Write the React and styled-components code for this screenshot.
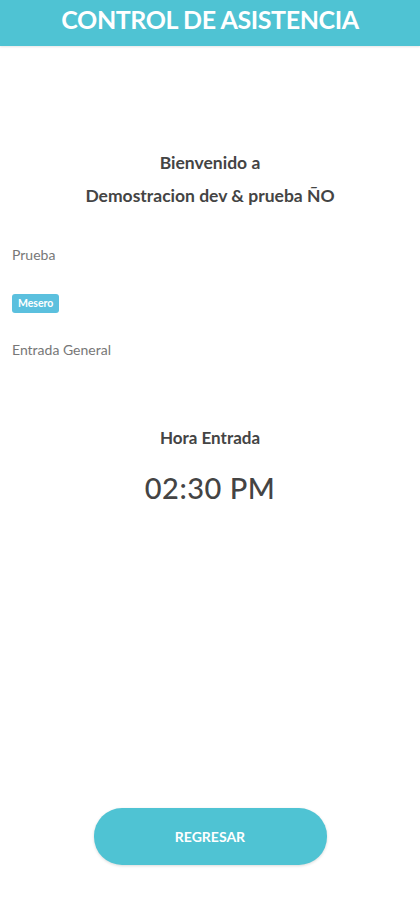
import styled, { createGlobalStyle } from "styled-components";

const Global = createGlobalStyle`
  html, body { margin: 0; padding: 0; background: #fff; }
  body { font-family: Lato, "Open Sans", "Liberation Sans", sans-serif; }
`;

const Page = styled.div`
  display: flex;
  flex-direction: column;
  min-height: 900px;
  box-sizing: border-box;
`;

const Header = styled.header`
  height: 46px;
  background: #4fc3d3;
  display: flex;
  justify-content: center;
  align-items: flex-start;
  box-shadow: 0 1px 2px rgba(0, 0, 0, 0.1);
`;

const Title = styled.h1`
  margin: 0;
  margin-top: 2px;
  color: #fff;
  font-size: 25px;
  font-weight: 700;
  line-height: 34px;
  letter-spacing: -0.4px;
`;

const Welcome = styled.div`
  margin-top: 100px;
  text-align: center;
  color: #444;
  font-size: 17.5px;
  font-weight: 700;
  line-height: 33px;
`;

const Info = styled.div`
  padding: 0 12px;
  margin-top: 34px;
  display: flex;
  flex-direction: column;
  align-items: flex-start;
`;

const Label = styled.div`
  color: #777;
  font-size: 14px;
  line-height: 18px;
  margin-bottom: ${(p) => p.gap || 0}px;
`;

const Badge = styled.span`
  background: #5bc0de;
  color: #fff;
  font-size: 10.5px;
  font-weight: 700;
  padding: 3px 6px;
  border-radius: 3px;
  line-height: 13px;
  margin-bottom: 28px;
`;

const Clock = styled.div`
  margin-top: 68px;
  text-align: center;
  color: #444;
`;

const ClockLabel = styled.div`
  font-size: 17px;
  font-weight: 700;
  line-height: 22px;
`;

const Time = styled.div`
  margin-top: 21px;
  font-size: 29px;
  font-weight: 500;
  letter-spacing: 0.5px;
`;

const Footer = styled.div`
  margin-top: auto;
  padding-bottom: 35px;
  display: flex;
  justify-content: center;
`;

const Button = styled.button`
  width: 233px;
  height: 57px;
  border: none;
  border-radius: 28px;
  background: #4fc3d3;
  color: #fff;
  font-family: inherit;
  font-size: 14px;
  font-weight: 700;
  box-shadow: 0 1px 3px rgba(0, 0, 0, 0.15);
`;

export default function App() {
  return (
    <Page>
      <Global />
      <Header>
        <Title>CONTROL DE ASISTENCIA</Title>
      </Header>
      <Welcome>
        Bienvenido a
        <br />
        Demostracion dev &amp; prueba ÑO
      </Welcome>
      <Info>
        <Label gap={30}>Prueba</Label>
        <Badge>Mesero</Badge>
        <Label>Entrada General</Label>
      </Info>
      <Clock>
        <ClockLabel>Hora Entrada</ClockLabel>
        <Time>02:30 PM</Time>
      </Clock>
      <Footer>
        <Button>REGRESAR</Button>
      </Footer>
    </Page>
  );
}
